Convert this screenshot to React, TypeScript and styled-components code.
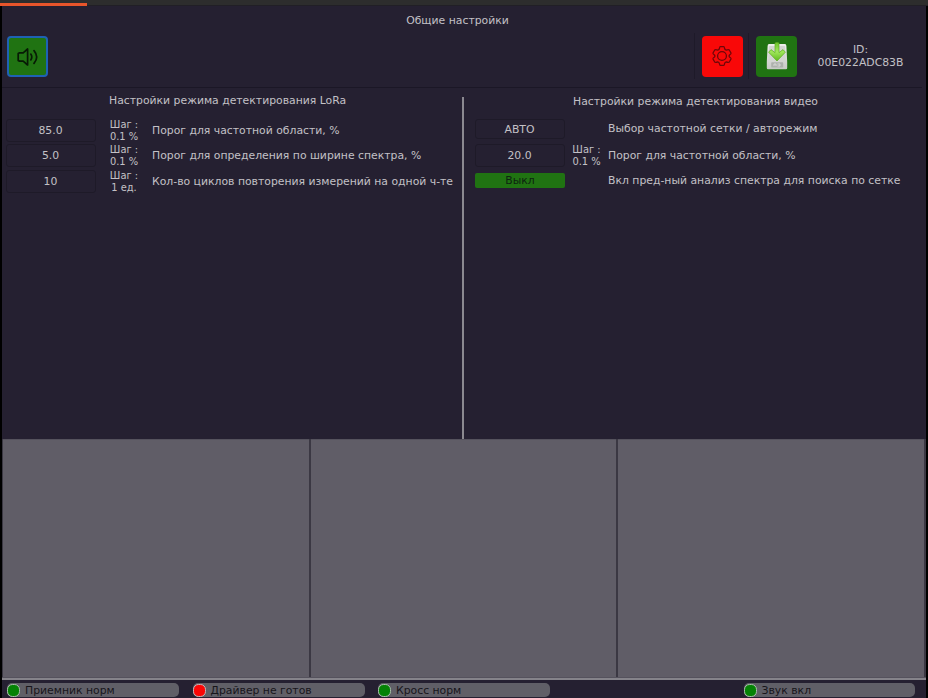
import React from "react";
import styled, { createGlobalStyle } from "styled-components";

const Global = createGlobalStyle`
  * { box-sizing: border-box; }
  html, body { margin: 0; background: #000; overflow: hidden; }
  body { font-family: "DejaVu Sans", sans-serif; font-size: 10.84px; color: #c3c1c6; }
`;

const Screen = styled.div`
  width: 928px;
  height: 698px;
  display: flex;
  flex-direction: column;
  background: #000;
`;

const TopStrip = styled.div`
  height: 6px;
  flex: none;
  background: linear-gradient(#2d2d2d 0 5px, #211f26 5px);
  padding-top: 3px;
`;

const Progress = styled.div`
  width: 86.5px;
  height: 3px;
  background: #e7552b;
`;

const Window = styled.div`
  flex: 1;
  min-height: 0;
  margin: 0 2.5px 0 1.5px;
  background: #252031;
  display: flex;
  flex-direction: column;
`;

const Header = styled.header`
  height: 82px;
  flex: none;
  border-bottom: 1px solid #1b1726;
  margin-right: 4px;
`;

const Title = styled.h1`
  margin: 0;
  height: 27px;
  padding-right: 8px;
  font-size: inherit;
  font-weight: 400;
  line-height: 29px;
  text-align: center;
`;

const Toolbar = styled.div`
  display: flex;
  height: 46px;
  align-items: center;
  padding-left: 5.5px;
`;

const ToolButton = styled.button<{ $bg: string; $focus?: boolean }>`
  width: 41px;
  height: 41px;
  padding: ${(p) => (p.$focus ? "1px 0 0" : "0")};
  border: ${(p) => (p.$focus ? "2px solid #1e62b4" : "0")};
  border-radius: 4px;
  background: ${(p) => p.$bg};
  display: flex;
  align-items: center;
  justify-content: center;
`;

const Spacer = styled.div`
  flex: 1;
`;

const Cell = styled.div`
  width: 54.3px;
  height: 46px;
  padding-left: 7px;
  border-left: 1px solid #1e1a29;
  display: flex;
  align-items: center;
`;

const DeviceId = styled.div`
  width: 119px;
  padding: 2px 3px 0 0;
  text-align: center;
  line-height: 12.6px;
`;

const Panels = styled.main`
  height: 351px;
  flex: none;
  display: flex;
`;

const Panel = styled.section<{ $width: number; $left: number }>`
  width: ${(p) => p.$width}px;
  padding-left: ${(p) => p.$left}px;
  flex: none;
`;

const Divider = styled.div`
  width: 1.5px;
  margin-top: 9px;
  background: #8b8990;
  flex: none;
`;

const PanelTitle = styled.h2<{ $indent: number; $top: number }>`
  margin: 0;
  height: 31px;
  padding: ${(p) => p.$top}px 0 0 ${(p) => p.$indent}px;
  font-size: inherit;
  font-weight: 400;
  line-height: 16px;
  white-space: nowrap;
`;

const Row = styled.div<{ $step: number }>`
  display: grid;
  grid-template-columns: 90px ${(p) => p.$step}px 1fr;
  height: 25.4px;
  align-items: start;
`;

const Field = styled.div<{ $h: number }>`
  height: ${(p) => p.$h}px;
  padding-right: 1px;
  border: 1px solid #1e1a28;
  border-radius: 3px;
  line-height: ${(p) => p.$h - 1}px;
  text-align: center;
`;

const Toggle = styled.button`
  height: 15px;
  margin-top: 3.5px;
  padding: 0;
  border: 0;
  border-radius: 2px;
  background: #207312;
  color: #0d2410;
  font: inherit;
  line-height: 15px;
`;

const Step = styled.div`
  text-align: center;
  font-size: 9.9px;
  line-height: 11.8px;
`;

const Label = styled.div<{ $h: number }>`
  line-height: ${(p) => p.$h}px;
  white-space: nowrap;
`;

const Tiles = styled.div`
  height: 238px;
  flex: none;
  display: grid;
  grid-template-columns: 306.4px 305.4px 1fr;
  gap: 2px;
  padding: 0 2px 0 1px;
  background: #3b3843;
`;

const Tile = styled.div`
  background: #605d67;
  border-top: 1px solid #55525d;
`;

const StatusLine = styled.div`
  height: 3px;
  flex: none;
  background: linear-gradient(#55525d 0 1px, #85838a 1px 3px);
`;

const StatusBar = styled.footer`
  flex: 1;
  display: flex;
  align-items: flex-start;
  padding: 3px 10.5px 0 5.5px;
`;

const Status = styled.div<{ $w: number; $gap: number }>`
  width: ${(p) => p.$w}px;
  height: 14px;
  margin-right: ${(p) => p.$gap}px;
  border-radius: 5px;
  background: #605f67;
  color: #17151b;
  display: flex;
  align-items: center;
  gap: 5px;
  line-height: 15px;
  white-space: nowrap;
`;

const Lamp = styled.span<{ $on: boolean }>`
  width: 13px;
  height: 13px;
  flex: none;
  border: 1.5px solid ${(p) => (p.$on ? "#a9bfaa" : "#c8b4b6")};
  border-radius: 5.5px;
  background: ${(p) => (p.$on ? "#058205" : "#fb0505")};
`;

const SpeakerIcon = () => (
  <svg width="22" height="20" viewBox="0 0 22 20" fill="none" stroke="#071a05" strokeWidth="1.7" strokeLinejoin="round" strokeLinecap="round">
    <path d="M1.2 6.6 2.6 5.8H6.2L10.6 2V18L6.2 14.2H2.6L1.2 13.4Z" />
    <path d="M13.8 7.1Q15.8 10 13.8 12.9M17 3.6Q22.4 10 17 16.4" />
  </svg>
);

const GearIcon = () => (
  <svg width="22" height="22" viewBox="0 0 22 22" fill="none" stroke="#6e0709" strokeWidth="1.3" strokeLinejoin="round">
    <path d="M9.4 1.6H12.6Q13.4 1.6 13.5 3.2 13.7 4.8 15.2 5.2 17.7 4.2 18.4 5.2L20 8Q20.3 8.8 18.8 9.7 17.4 11 18.8 12.3 20.3 13.2 20 14L18.4 16.8Q17.7 17.8 15.2 16.8 13.7 17.2 13.5 18.8 13.4 20.4 12.6 20.4H9.4Q8.6 20.4 8.5 18.8 8.3 17.2 6.8 16.8 4.3 17.8 3.6 16.8L2 14Q1.7 13.2 3.2 12.3 4.6 11 3.2 9.7 1.7 8.8 2 8L3.6 5.2Q4.3 4.2 6.8 5.2 8.3 4.8 8.5 3.2 8.6 1.6 9.4 1.6Z" />
    <circle cx="11" cy="11" r="4.4" />
  </svg>
);

const SaveIcon = () => (
  <svg width="22" height="28" viewBox="0 0 22 28">
    <defs>
      <linearGradient id="disk" x1="0" y1="0" x2="0" y2="1">
        <stop offset="0" stopColor="#eeeeec" />
        <stop offset="1" stopColor="#c8cac6" />
      </linearGradient>
      <linearGradient id="arrow" x1="0" y1="0" x2="0" y2="1">
        <stop offset="0" stopColor="#6bc22b" />
        <stop offset=".5" stopColor="#a1e75c" />
        <stop offset="1" stopColor="#60b91d" />
      </linearGradient>
    </defs>
    <path d="M3 2H19Q20.3 2 20.4 4L21.2 20V26Q21.2 27.2 20 27.2H2Q.8 27.2 .8 26V20L1.6 4Q1.7 2 3 2Z" fill="url(#disk)" />
    <path d="M3.2 4H18.8L19.6 18.5H2.4Z" fill="#d3d5d1" />
    <rect x="5.2" y="20.2" width="12" height="5.2" rx=".7" fill="#aeb1ad" />
    <path d="M8 24v-2h2v2M11.5 22h2.5v2h-2.5" fill="none" stroke="#dfe0de" strokeWidth=".8" />
    <path d="M9 1Q11 -.2 13 1V10.6L17 7.6 19.4 10.2 11 19 2.6 10.2 5 7.6 9 10.6Z" fill="url(#arrow)" stroke="#5cae20" strokeWidth=".7" strokeLinejoin="round" />
  </svg>
);

export default function App() {
  return (
    <>
      <Global />
      <Screen>
        <TopStrip><Progress /></TopStrip>
        <Window>
          <Header>
            <Title>Общие настройки</Title>
            <Toolbar>
              <ToolButton $bg="#207312" $focus><SpeakerIcon /></ToolButton>
              <Spacer />
              <Cell><ToolButton $bg="#f90808"><GearIcon /></ToolButton></Cell>
              <Cell><ToolButton $bg="#207312"><SaveIcon /></ToolButton></Cell>
              <DeviceId>ID:<br />00E022ADC83B</DeviceId>
            </Toolbar>
          </Header>
          <Panels>
            <Panel $width={460.5} $left={4.5}>
              <PanelTitle $indent={103} $top={5}>Настройки режима детектирования LoRa</PanelTitle>
              <Row $step={56}>
                <Field $h={23}>85.0</Field>
                <Step>Шаг :<br />0.1 %</Step>
                <Label $h={23}>Порог для частотной области, %</Label>
              </Row>
              <Row $step={56}>
                <Field $h={23}>5.0</Field>
                <Step>Шаг :<br />0.1 %</Step>
                <Label $h={23}>Порог для определения по ширине спектра, %</Label>
              </Row>
              <Row $step={56}>
                <Field $h={23}>10</Field>
                <Step>Шаг :<br />1 ед.</Step>
                <Label $h={23}>Кол-во циклов повторения измерений на одной ч-те</Label>
              </Row>
            </Panel>
            <Divider />
            <Panel $width={460} $left={11.5}>
              <PanelTitle $indent={98} $top={6}>Настройки режима детектирования видео</PanelTitle>
              <Row $step={43}>
                <Field $h={20}>АВТО</Field>
                <span />
                <Label $h={20}>Выбор частотной сетки / авторежим</Label>
              </Row>
              <Row $step={43}>
                <Field $h={23}>20.0</Field>
                <Step>Шаг :<br />0.1 %</Step>
                <Label $h={23}>Порог для частотной области, %</Label>
              </Row>
              <Row $step={43}>
                <Toggle>Выкл</Toggle>
                <span />
                <Label $h={22}>Вкл пред-ный анализ спектра для поиска по сетке</Label>
              </Row>
            </Panel>
          </Panels>
          <Tiles><Tile /><Tile /><Tile /></Tiles>
          <StatusLine />
          <StatusBar>
            <Status $w={172} $gap={13.5}><Lamp $on />Приемник норм</Status>
            <Status $w={172} $gap={13.5}><Lamp $on={false} />Драйвер не готов</Status>
            <Status $w={172} $gap={0}><Lamp $on />Кросс норм</Status>
            <Spacer />
            <Status $w={171.5} $gap={0}><Lamp $on />Звук вкл</Status>
          </StatusBar>
        </Window>
      </Screen>
    </>
  );
}
